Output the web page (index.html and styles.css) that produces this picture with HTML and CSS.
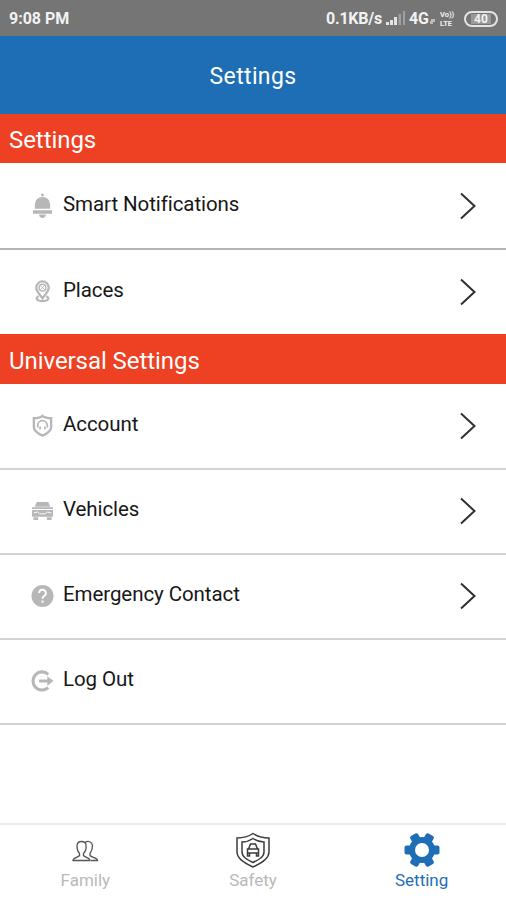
FILE: index.html
```html
<!DOCTYPE html>
<html lang="en">
<head>
<meta charset="utf-8">
<meta name="viewport" content="width=device-width, initial-scale=1">
<title>Settings</title>
<link rel="stylesheet" href="styles.css">
</head>
<body>
<div class="status">
  <span class="time">9:08 PM</span>
  <span class="rate">0.1KB/s</span>
  <svg class="signal" width="20" height="16" viewBox="0 0 20 16"><path fill="#e4e4e4" d="M0 11h3v3H0zM4 9h3v5H4zM8 6h3v8H8z"/><path fill="#a0a0a0" d="M12.500 3h2.500v11h-2.500zM17 0h2v14h-2z"/></svg>
  <span class="net">4G</span>
  <svg class="roam" width="6" height="6" viewBox="0 0 6 6"><path d="M1 0h4v3H3v2H0V2h1z" fill="#bbb"/></svg>
  <span class="volte"><span>Vo))</span><span>LTE</span></span>
  <span class="battery"><span>40</span></span>
</div>
<header class="header">Settings</header>
<main class="main">
  <h2 class="section">Settings</h2>
  <div class="row thick">
    <svg class="icon" viewBox="0 0 24 26"><g fill="#b7b7b7"><circle cx="12" cy="2" r="1.500"/><path d="M4 16.500V12a8 8 0 0 1 16 0v4.500z"/><path d="M2 18h20v3.500H2zM8.500 22.500h7a3.500 3.500 0 0 1-7 0z"/></g></svg>
    <span class="label">Smart Notifications</span>
    <svg class="chevron" viewBox="0 0 16 28"><path d="M1 1.500 14.500 14 1 26.500"/></svg>
  </div>
  <div class="row last">
    <svg class="icon" viewBox="0 0 24 26"><g fill="none" stroke="#b7b7b7" stroke-width="2.400"><path d="M12 20C9 16 5.500 12.500 5.500 9a6.500 6.500 0 0 1 13 0c0 3.500-3.500 7-6.500 11z"/><circle cx="12" cy="9" r="3.500" stroke-width="1.500"/><path d="m9.500 6.500 5 5m0-5-5 5" stroke-width="1"/><path d="M8 18c-4 2-2 5 4 5s8-3 4-5"/></g></svg>
    <span class="label">Places</span>
    <svg class="chevron" viewBox="0 0 16 28"><path d="M1 1.500 14.500 14 1 26.500"/></svg>
  </div>
  <h2 class="section second">Universal Settings</h2>
  <div class="row">
    <svg class="icon" viewBox="0 0 24 26"><g fill="none" stroke="#b7b7b7" stroke-width="2.500"><path d="M12 3C9 5.500 7 5.500 3 5.500v9c0 4.500 4.500 7 9 9 4.500-2 9-4.500 9-9v-9C17 5.500 15 5.500 12 3z"/><path d="M7 15v-2a5 5 0 0 1 10 0v2M9.500 17v-3m5 3v-3" stroke-width="1.800"/></g></svg>
    <span class="label">Account</span>
    <svg class="chevron" viewBox="0 0 16 28"><path d="M1 1.500 14.500 14 1 26.500"/></svg>
  </div>
  <div class="row">
    <svg class="icon" viewBox="0 0 24 26"><g fill="#b7b7b7"><path d="m4 9 2-5h12l2 5zM1 9.500h22v2H1z"/><path d="M1 12.500h22v7H1zM2.500 20h5v3h-5zm14 0h5v3h-5z"/></g><path d="M3 15.500l4-1 2 2h6l2-2 4 1" fill="none" stroke="#fff"/></svg>
    <span class="label">Vehicles</span>
    <svg class="chevron" viewBox="0 0 16 28"><path d="M1 1.500 14.500 14 1 26.500"/></svg>
  </div>
  <div class="row">
    <svg class="icon" viewBox="0 0 24 26"><circle cx="12" cy="13.500" r="11.500" fill="#b7b7b7"/><path d="M8.500 10.500a3.500 3.500 0 1 1 5.200 3c-1.200.8-1.700 1.300-1.700 3M12 18.300v2.200" fill="none" stroke="#fff" stroke-width="2"/></svg>
    <span class="label">Emergency Contact</span>
    <svg class="chevron" viewBox="0 0 16 28"><path d="M1 1.500 14.500 14 1 26.500"/></svg>
  </div>
  <div class="row">
    <svg class="icon" viewBox="0 0 24 26"><path d="M18 6.500a9.500 9.500 0 1 0 0 14M8.500 13.500H19" fill="none" stroke="#b7b7b7" stroke-width="3.200"/><path d="m17 8.500 6.500 5-6.500 5z" fill="#b7b7b7"/></svg>
    <span class="label">Log Out</span>
  </div>
</main>
<nav class="tabs">
  <div class="tab family">
    <svg width="36" height="36" viewBox="0 0 36 36"><path d="M5 28.500h17c0-3-5-3-6.500-5v-2c2-2 3-4.500 2.500-8 0-3-2-4-4.500-4S9 11 9 14c0 3 .5 5.500 2.500 7.500v2C10 25.500 5 25.500 5 28.500zM17 10.500c3-2 7-1 7.500 3 0 3-.5 5.500-2.500 8v2c1.500 2 7.500 2 7.500 5H23" transform="translate(1)" fill="none" stroke="#555" stroke-width="1.300"/></svg>
    <span>Family</span>
  </div>
  <div class="tab">
    <svg width="36" height="36" viewBox="0 0 36 36"><g fill="none" stroke="#3c3c3c" stroke-width="1.500"><path d="M18 1.500C12 5.500 7 6 2 6v14c0 7 8 11.500 16 15 8-3.500 16-8 16-15V6C29 6 24 5.500 18 1.500z"/><path d="M18 6.500c-4 2.700-7 3.500-11 3.500v10c0 5 5 7.500 11 10.500 6-3 11-5.500 11-10.500V10c-4 0-7-.8-11-3.500z"/><path d="m13.500 17 2-5h5l2 5M12.500 17h11v4h-11zm0 4v3h2v-3m7 0v3h2v-3"/></g></svg>
    <span>Safety</span>
  </div>
  <div class="tab active">
    <svg width="36" height="36" viewBox="0 0 36 36"><g fill="#1e6eb6"><circle cx="18" cy="18" r="13"/><rect x="0.500" y="13.500" width="35" height="9" rx="2"/><rect x="0.500" y="13.500" width="35" height="9" rx="2" transform="rotate(60 18 18)"/><rect x="0.500" y="13.500" width="35" height="9" rx="2" transform="rotate(120 18 18)"/></g><circle cx="18" cy="18" r="7" fill="#fff"/></svg>
    <span>Setting</span>
  </div>
</nav>
</body>
</html>
```
FILE: styles.css
```css
* { box-sizing: border-box; }
body { margin: 0; height: 900px; display: flex; flex-direction: column; overflow: hidden; background: #fff; font-family: Roboto, "Liberation Sans", sans-serif; color: #171717; }
.status { height: 36px; flex: none; display: flex; align-items: center; padding: 1px 8px 0 9px; background: #757575; color: #f2f2f2; font-size: 16px; font-weight: 700; }
.time { margin-right: auto; }
.rate { letter-spacing: -.25px; }
.signal { margin: 0 3px 0 4px; }
.roam { margin: 6px 4px 0 1px; }
.volte { display: flex; flex-direction: column; width: 17px; font-size: 7.500px; line-height: 9px; margin-right: 7px; }
.battery { width: 34px; height: 16px; border: 2px solid #e4e4e4; border-radius: 8px; padding: 1px 5px; display: flex; }
.battery span { width: 20px; background: #999; font-size: 12px; line-height: 10px; text-align: center; }
.header { height: 78px; flex: none; display: flex; align-items: center; justify-content: center; padding-top: 2px; background: #1e6eb6; color: #fff; font-size: 23px; letter-spacing: .35px; }
.main { flex: 1; }
.section { margin: 0; height: 49px; padding: 3px 9px 0; display: flex; align-items: center; background: #ee4022; color: #fff; font-size: 24px; font-weight: 400; letter-spacing: -.06px; }
.second { height: 50px; }
.row { height: 85px; display: flex; align-items: center; padding: 0 30px 5px 31px; border-bottom: 2px solid #d2d2d2; }
.second + .row { height: 86px; }
.thick { height: 87px; padding-bottom: 4px; border-bottom-color: #b4b4b4; }
.last { height: 84px; padding-bottom: 4px; border-bottom: 0; }
.icon { width: 23px; height: 25px; margin: 3px 9px 0 0; }
.label { flex: 1; font-size: 20.500px; letter-spacing: -.08px; }
.chevron { width: 16px; height: 28px; margin-top: 4px; fill: none; stroke: #303030; stroke-width: 2; }
.tabs { height: 77px; flex: none; display: grid; grid-template-columns: repeat(3, 1fr); border-top: 2px solid #ebebeb; }
.tab { display: flex; flex-direction: column; align-items: center; padding-top: 7px; color: #b9b9b9; font-size: 17px; line-height: 24px; }
.family { padding-left: 2px; }
.active { color: #1e6eb6; }
```
